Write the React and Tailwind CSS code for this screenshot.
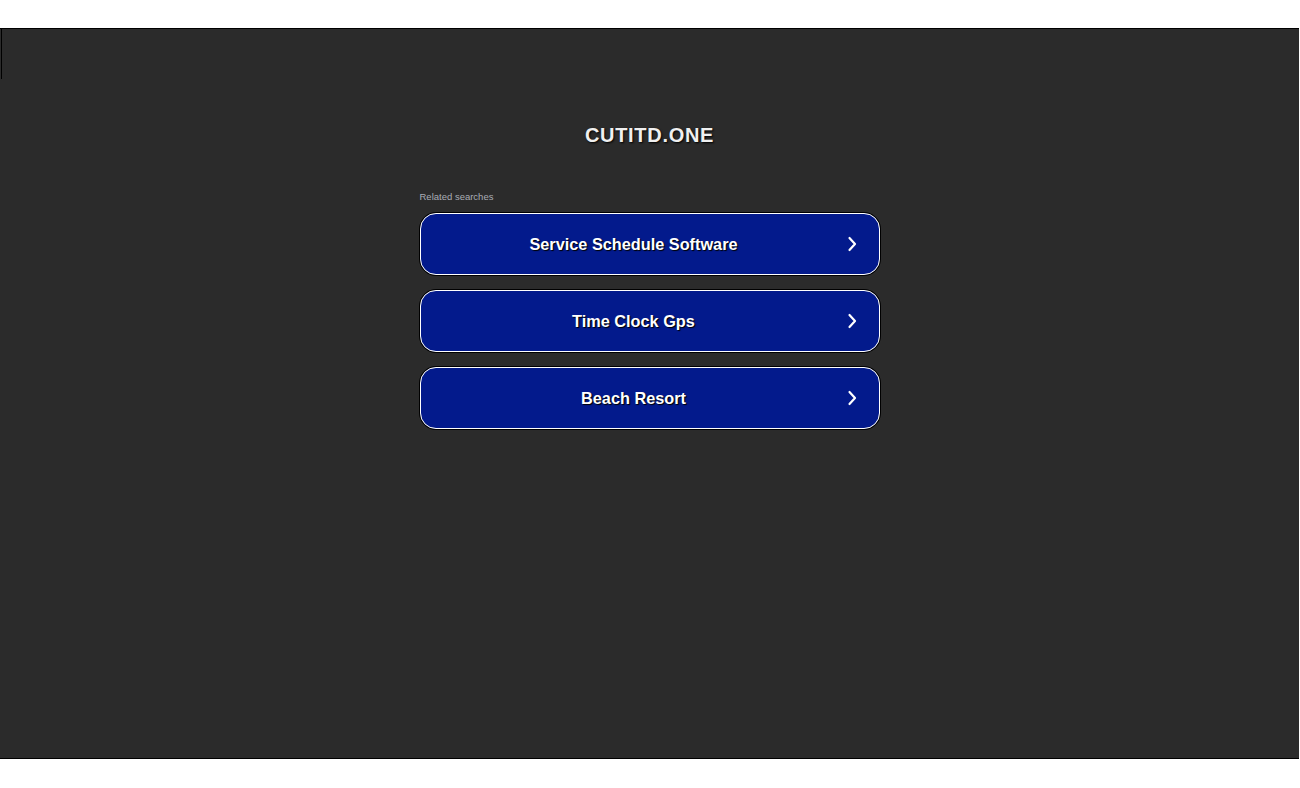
import React from 'react';

const searches = ['Service Schedule Software', 'Time Clock Gps', 'Beach Resort'];

function Chevron() {
  return (
    <svg width="10" height="16" viewBox="0 0 10 16" fill="none" className="shrink-0">
      <polyline points="2.5,2 8,8 2.5,14" stroke="#ffffff" strokeWidth="2.2" strokeLinecap="round" strokeLinejoin="round" />
    </svg>
  );
}

export default function App() {
  return (
    <div className="min-h-[788px] bg-white pt-[28px]" style={{ fontFamily: '"Liberation Sans", Arial, sans-serif' }}>
      <div className="w-[1299px] h-[731px] bg-[#2b2b2b] border-y border-black">
        <div className="h-[50px] w-[2px] border-l border-black ml-px" />
        <h1 className="mt-[44px] text-center text-[20px] leading-[24px] font-bold tracking-[0.7px] text-[#f0f0f0] [text-shadow:1px_1px_2px_#000]">
          CUTITD.ONE
        </h1>
        <div className="w-[462px] mx-auto mt-[44px]">
          <p className="text-[9.5px] leading-[12px] text-[#a9adb5] pl-px">Related searches</p>
          <div className="mt-[9px] flex flex-col gap-[13px]">
            {searches.map(s => (
              <a key={s} href="#" className="block rounded-[17px] border border-black">
                <div className="h-[62px] rounded-[16px] border border-white bg-[#031a8c] flex items-center pr-[22px]">
                  <span className="flex-1 text-center text-[16.3px] font-bold text-white [text-shadow:1px_1px_1px_#000]">{s}</span>
                  <Chevron />
                </div>
              </a>
            ))}
          </div>
        </div>
      </div>
    </div>
  );
}
